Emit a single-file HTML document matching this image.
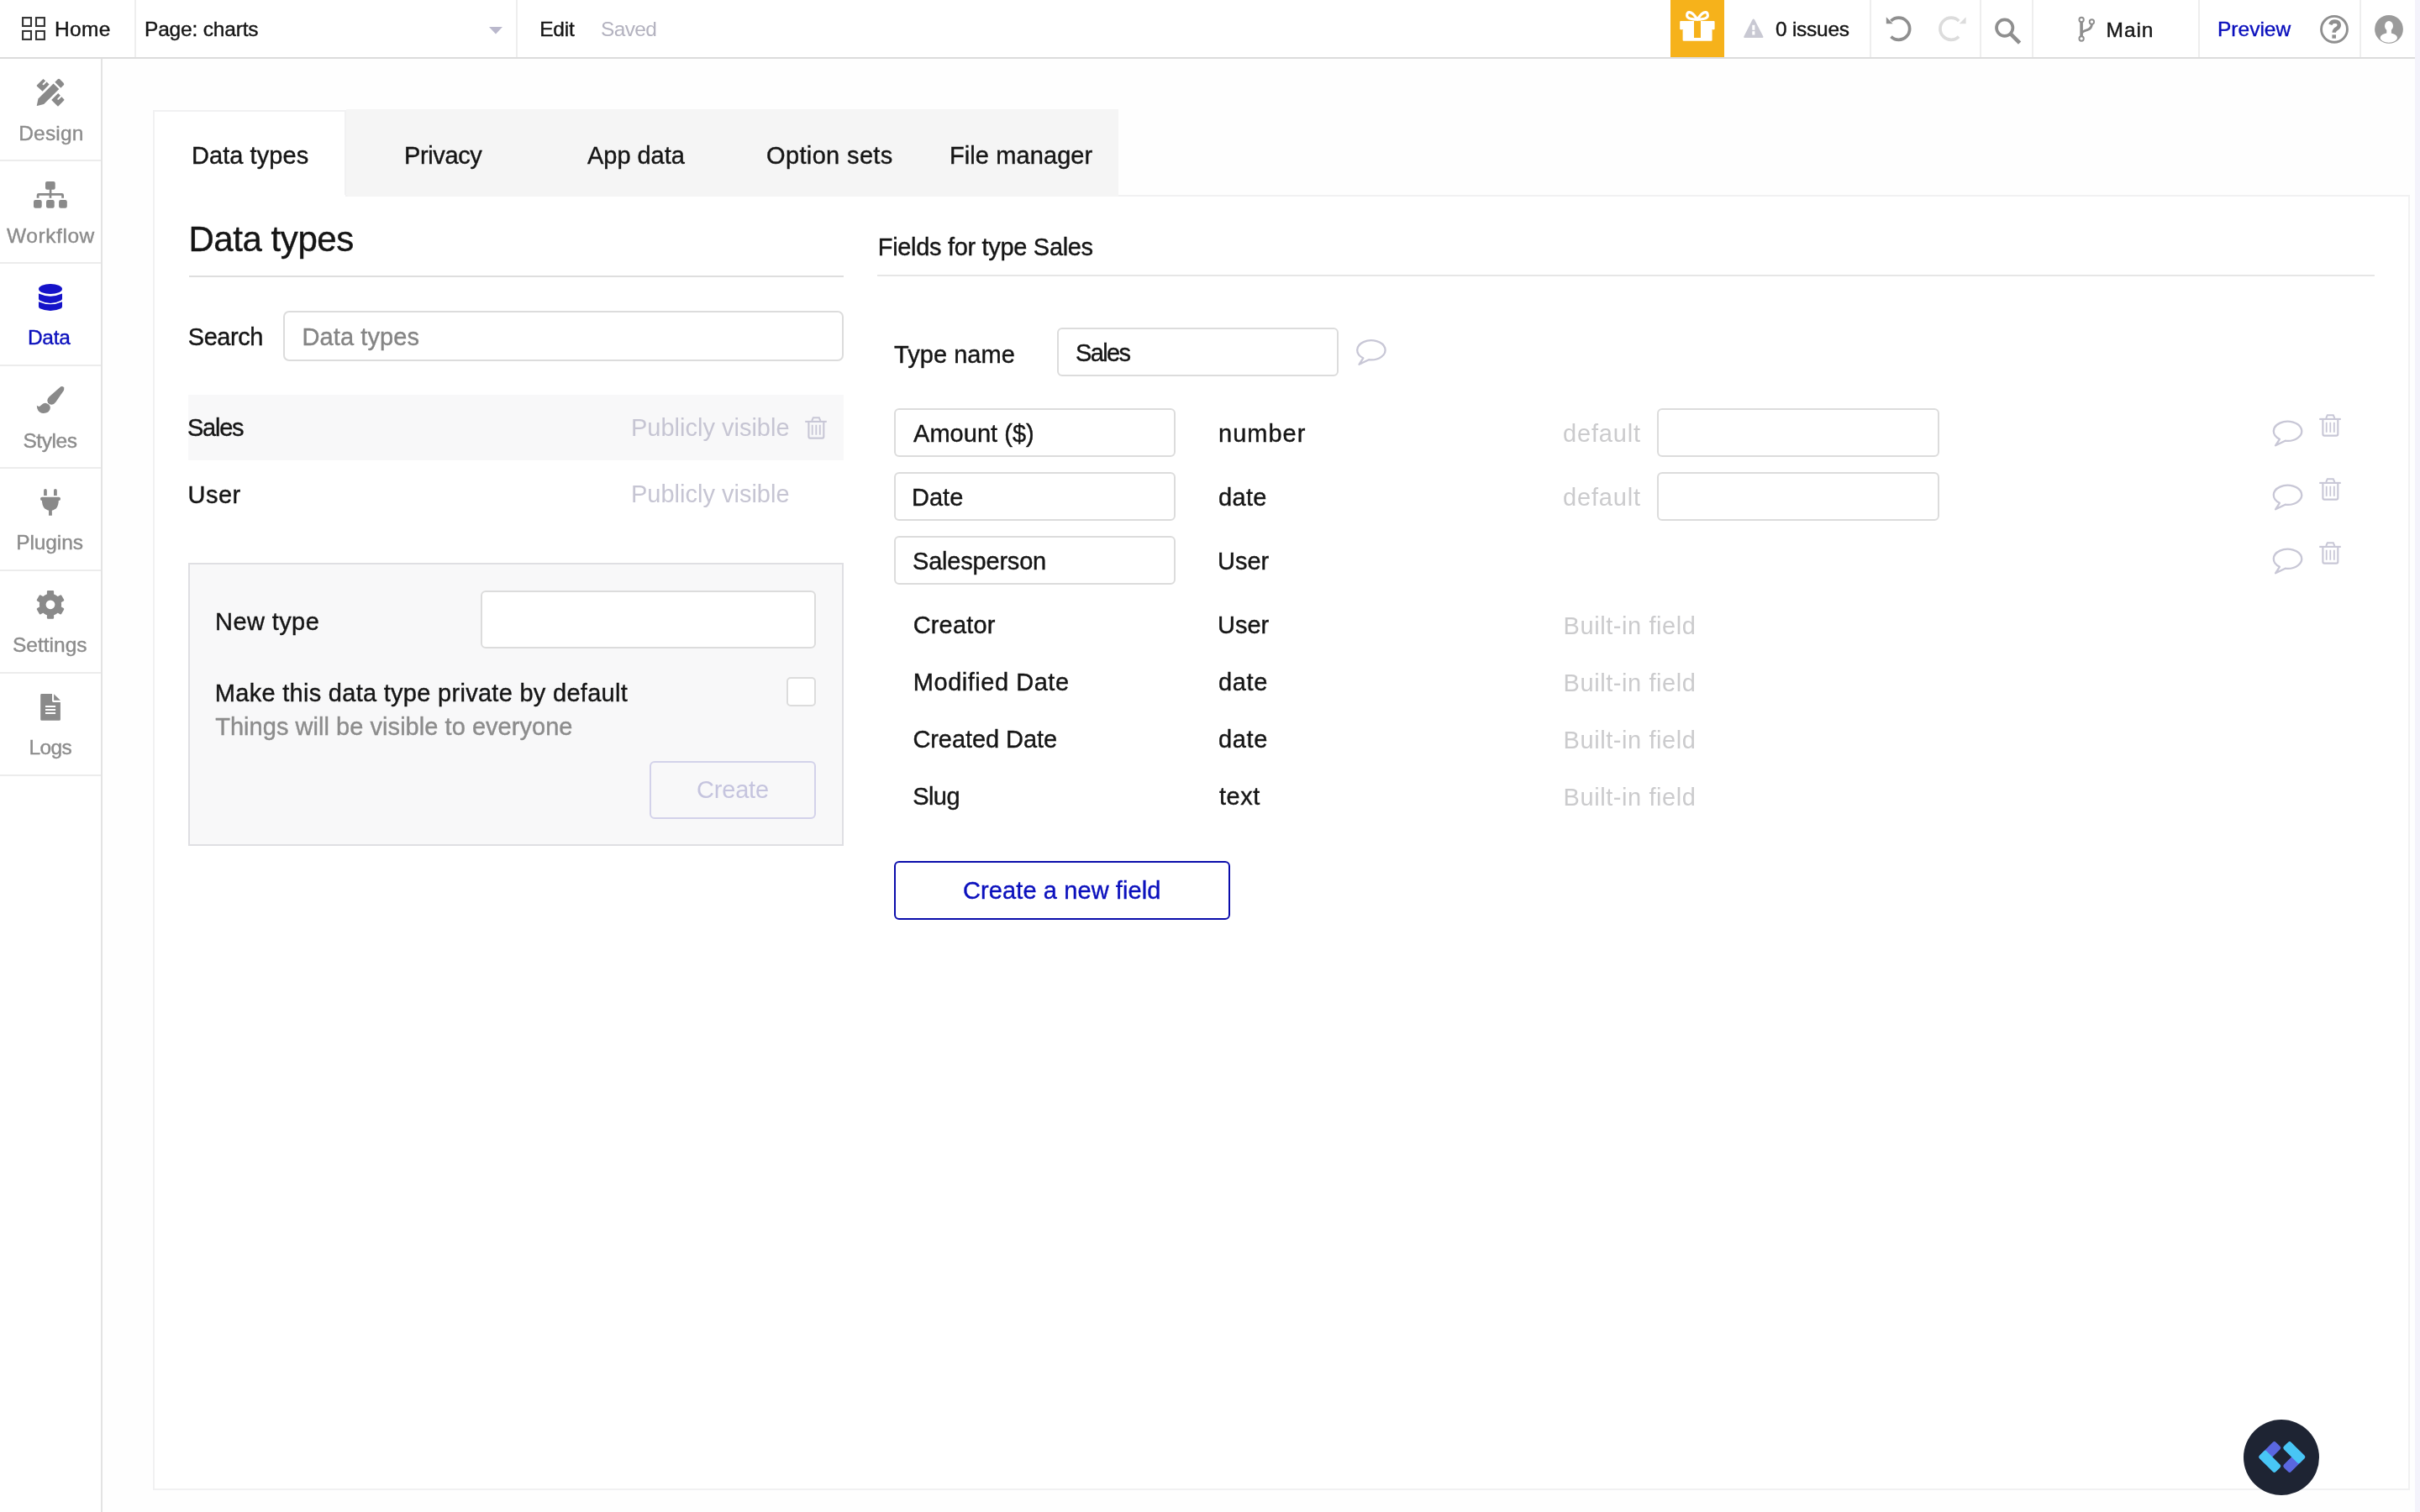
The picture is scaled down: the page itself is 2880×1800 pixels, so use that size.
<!DOCTYPE html>
<html><head><meta charset="utf-8"><title>Data</title>
<style>
html,body{margin:0;padding:0;}
body{width:2880px;height:1800px;overflow:hidden;position:relative;background:#fefefe;font-family:"Liberation Sans",sans-serif;}
.t{position:absolute;line-height:1;white-space:nowrap;-webkit-text-stroke:0.4px currentColor;}
.a{position:absolute;box-sizing:border-box;}
</style></head><body>
<!-- right strip -->
<div class="a" style="left:2874px;top:0;width:6px;height:1800px;background:#f4f3fb"></div>
<!-- topbar -->
<div class="a" style="left:0;top:0;width:2874px;height:68px;background:#fff"></div>
<div class="a" style="left:0;top:68px;width:2874px;height:2px;background:#dcdcdc"></div>
<div class="a" style="left:160px;top:0;width:2px;height:68px;background:#eeeeee"></div>
<div class="a" style="left:614px;top:0;width:2px;height:68px;background:#eeeeee"></div>
<div class="a" style="left:2225px;top:0;width:2px;height:68px;background:#eeeeee"></div>
<div class="a" style="left:2356px;top:0;width:2px;height:68px;background:#eeeeee"></div>
<div class="a" style="left:2418px;top:0;width:2px;height:68px;background:#eeeeee"></div>
<div class="a" style="left:2616px;top:0;width:2px;height:68px;background:#eeeeee"></div>
<div class="a" style="left:2808px;top:0;width:2px;height:68px;background:#eeeeee"></div>
<div class="a" style="left:1988px;top:0;width:64px;height:68px;background:#f6b21b"></div>
<!-- sidebar -->
<div class="a" style="left:0;top:70px;width:120px;height:1730px;background:#fff"></div>
<div class="a" style="left:120px;top:70px;width:2px;height:1730px;background:#e3e3e3"></div>
<div class="a" style="left:0;top:190px;width:120px;height:2px;background:#ececec"></div>
<div class="a" style="left:0;top:312px;width:120px;height:2px;background:#ececec"></div>
<div class="a" style="left:0;top:434px;width:120px;height:2px;background:#ececec"></div>
<div class="a" style="left:0;top:556px;width:120px;height:2px;background:#ececec"></div>
<div class="a" style="left:0;top:678px;width:120px;height:2px;background:#ececec"></div>
<div class="a" style="left:0;top:800px;width:120px;height:2px;background:#ececec"></div>
<div class="a" style="left:0;top:922px;width:120px;height:2px;background:#ececec"></div>
<!-- card -->
<div class="a" style="left:182px;top:131px;width:230px;height:103px;background:#fff;border:2px solid #f1f1f2;border-bottom:none"></div>
<div class="a" style="left:182px;top:232px;width:2686px;height:1542px;background:#fff;border:2px solid #f1f1f2"></div>
<div class="a" style="left:184px;top:232px;width:227px;height:4px;background:#fff"></div>
<div class="a" style="left:412px;top:130px;width:919px;height:104px;background:#f5f5f5;border-bottom-left-radius:4px"></div>
<!-- underlines -->
<div class="a" style="left:225px;top:328px;width:779px;height:2px;background:#dedede"></div>
<div class="a" style="left:1044px;top:327px;width:1782px;height:2px;background:#e6e6e6"></div>
<!-- left panel -->
<div class="a" style="left:337px;top:370px;width:667px;height:60px;background:#fff;border:2px solid #dcdcdc;border-radius:7px"></div>
<div class="a" style="left:224px;top:470px;width:780px;height:78px;background:#f8f8f9"></div>
<div class="a" style="left:224px;top:670px;width:780px;height:337px;background:#f8f8f9;border:2px solid #dfdfe3"></div>
<div class="a" style="left:572px;top:703px;width:399px;height:69px;background:#fff;border:2px solid #dcdcdc;border-radius:6px"></div>
<div class="a" style="left:936px;top:806px;width:35px;height:35px;background:#fff;border:2px solid #dcdcdc;border-radius:5px"></div>
<div class="a" style="left:773px;top:906px;width:198px;height:69px;border:2px solid #d3d2ea;border-radius:6px"></div>
<!-- right panel -->
<div class="a" style="left:1258px;top:390px;width:335px;height:58px;background:#fff;border:2px solid #dcdcdc;border-radius:6px"></div>
<div class="a" style="left:1064px;top:486px;width:335px;height:58px;background:#fff;border:2px solid #dcdcdc;border-radius:6px"></div>
<div class="a" style="left:1064px;top:562px;width:335px;height:58px;background:#fff;border:2px solid #dcdcdc;border-radius:6px"></div>
<div class="a" style="left:1064px;top:638px;width:335px;height:58px;background:#fff;border:2px solid #dcdcdc;border-radius:6px"></div>
<div class="a" style="left:1972px;top:486px;width:336px;height:58px;background:#fff;border:2px solid #dcdcdc;border-radius:6px"></div>
<div class="a" style="left:1972px;top:562px;width:336px;height:58px;background:#fff;border:2px solid #dcdcdc;border-radius:6px"></div>
<div class="a" style="left:1064px;top:1025px;width:400px;height:70px;border:2px solid #0a0cab;border-radius:6px"></div>
<!-- logo -->
<div class="a" style="left:2670px;top:1690px;width:90px;height:90px;border-radius:50%;background:#1e2433"></div>
<svg class="a" style="left:0;top:0" width="2880" height="1800" viewBox="0 0 2880 1800"><g fill="none" stroke="#333" stroke-width="2.1"><rect x="27.1" y="21.1" width="9.9" height="9.9"/><rect x="43" y="21.1" width="9.9" height="9.9"/><rect x="27.1" y="37" width="9.9" height="9.9"/><rect x="43" y="37" width="9.9" height="9.9"/></g><path d="M582,32 L598,32 L590,40.5 Z" fill="#bab8cc"/><g fill="#8a8a8a"><path d="M51.4,94 L44,101.3 Q43.3,102 44,102.7 L50.6,108.8 L58.6,100.6 L55.6,97.6 L52.3,100.9 Q51.4,101.6 50.8,100.9 Q50.2,100.2 50.9,99.5 L54.2,96.2 Z"/><path d="M69.2,110.9 L61.2,119 L68.4,126.3 Q69,126.8 69.6,126.3 L76.2,119.4 Q76.8,118.8 76.2,118.2 L73.3,115.3 L70,118.6 Q69.2,119.3 68.5,118.6 Q67.9,117.9 68.6,117.2 L71.9,113.8 Z"/><path d="M45.5,117.4 L63.6,99.4 L70.3,106 L52.2,124.1 L44.3,126 Q43.7,126.1 43.8,125.5 Z"/><path d="M65.3,97.7 L68.6,94.5 Q70,93.2 71.4,94.5 L75.6,98.7 Q77,100.1 75.6,101.5 L72.3,104.7 Z"/></g><g fill="#8a8a8a"><rect x="54" y="216" width="11.7" height="9.8" rx="2"/><rect x="58.8" y="225" width="2.6" height="6"/><path d="M43.7,235.8 L43.7,232.5 Q43.7,230.1 46.1,230.1 L73.6,230.1 Q76,230.1 76,232.5 L76,235.8 L73.2,235.8 L73.2,232.8 L46.5,232.8 L46.5,235.8 Z"/><rect x="58.6" y="232" width="2.7" height="3.8"/><rect x="40" y="238" width="9.7" height="9.8" rx="2.2"/><rect x="55" y="238" width="9.7" height="9.8" rx="2.2"/><rect x="70.1" y="238" width="9.7" height="9.8" rx="2.2"/></g><g fill="#1512c9"><ellipse cx="60" cy="344" rx="14" ry="6"/><path d="M46,349.6 Q60,355.8 74,349.6 L74,355.5 Q74,357 72.5,357.8 Q66.5,361 60,361 Q53.5,361 47.5,357.8 Q46,357 46,355.5 Z"/><path d="M46,359.3 Q60,365.4 74,359.3 L74,364.8 Q74,366.5 72.5,367.3 Q66.5,370 60,370 Q53.5,370 47.5,367.3 Q46,366.5 46,364.8 Z"/></g><g fill="#8a8a8a"><path d="M72.3,460.2 Q74.8,459.3 76,461.2 Q76.8,462.8 75.8,465 L66.3,478.8 Q64.3,481.6 61.5,481.8 Q58.6,481.6 57,479.4 Q55.6,477.2 56.8,474.8 Q58,472.8 60,471 Z"/><path d="M43.8,482.8 Q46.6,485.2 48.8,482.6 Q51.2,479.6 54,479.7 Q56.3,480 58,481.6 Q59.8,483.2 59.9,485.3 Q59.8,488.6 57.3,490.6 Q54.8,492.1 51.5,492 Q47.4,491.8 45.4,488.7 Q43.8,486.2 43.8,482.8 Z"/></g><g fill="#8a8a8a"><path d="M52.1,590 L52.1,584 Q52.1,582 54,582 Q55.8,582 55.8,584 L55.8,590 Z"/><path d="M64,590 L64,584 Q64,582 65.9,582 Q67.8,582 67.8,584 L67.8,590 Z"/><rect x="48" y="591.8" width="24" height="4.1" rx="2"/><path d="M49.9,595 L69.8,595 Q69.8,602.5 66.5,605.5 Q63.8,607.8 60,608.2 Q56.2,607.8 53.4,605.5 Q49.9,602.5 49.9,595 Z"/><path d="M58.1,607 L61.8,607 L61.9,613.8 L58,613.8 Z"/></g><g fill="#8a8a8a"><circle cx="60" cy="719.8" r="13.1"/><rect x="55.9" y="702.9" width="8.2" height="10" rx="1.2" transform="rotate(0 60 719.8)"/><rect x="55.9" y="702.9" width="8.2" height="10" rx="1.2" transform="rotate(60 60 719.8)"/><rect x="55.9" y="702.9" width="8.2" height="10" rx="1.2" transform="rotate(120 60 719.8)"/><rect x="55.9" y="702.9" width="8.2" height="10" rx="1.2" transform="rotate(180 60 719.8)"/><rect x="55.9" y="702.9" width="8.2" height="10" rx="1.2" transform="rotate(240 60 719.8)"/><rect x="55.9" y="702.9" width="8.2" height="10" rx="1.2" transform="rotate(300 60 719.8)"/></g><circle cx="60" cy="719.8" r="5.4" fill="#fff"/><g fill="#8a8a8a"><path d="M49.5,826 L62,826 L62,834.3 Q62,835.9 63.6,835.9 L71.9,835.9 L71.9,856.4 Q71.9,857.7 70.6,857.7 L49.5,857.7 Q48.2,857.7 48.2,856.4 L48.2,827.3 Q48.2,826 49.5,826 Z"/><path d="M64.1,826.2 L71.9,833.7 L64.1,833.7 Z"/></g><g fill="#fff"><rect x="54" y="840" width="12.1" height="2"/><rect x="54" y="844" width="12.1" height="2"/><rect x="54" y="848" width="12.1" height="2"/></g><g fill="#fff"><rect x="1999.2" y="24.9" width="41.4" height="10.4" rx="1"/><rect x="2002.6" y="35" width="35" height="13.7" rx="1"/></g><rect x="2016" y="25" width="8" height="20" fill="#f6b21b"/><g fill="none" stroke="#fff" stroke-width="3.1"><path d="M2020,23.2 C2017,18.5 2013.2,14.6 2010.4,14.6 C2008.2,14.6 2007.6,16.6 2007.6,18.6 C2007.7,21.6 2011,23 2020,23.2 Z" stroke-linejoin="round"/><path d="M2020,23.2 C2023,18.5 2026.8,14.6 2029.6,14.6 C2031.8,14.6 2032.4,16.6 2032.4,18.6 C2032.3,21.6 2029,23 2020,23.2 Z" stroke-linejoin="round"/></g><path d="M2086.8,22.5 Q2087.6,22.5 2088,23.3 L2098.4,43.6 Q2098.8,45 2097.6,45 L2076,45 Q2074.8,45 2075.3,43.6 L2085.6,23.3 Q2086,22.5 2086.8,22.5 Z" fill="#c9c9d3"/><rect x="2085.3" y="29.8" width="3.1" height="6" fill="#fff"/><rect x="2085.3" y="37.2" width="3.1" height="4.3" fill="#fff"/><path d="M2250.5,43.6 A13.05,13.05 0 1 0 2250.4,25" fill="none" stroke="#8f8f8f" stroke-width="3.7"/><path d="M2244.8,20.3 L2244.8,28.2 L2252.6,28.2 Z" fill="#8f8f8f"/><path d="M2331.1,43.6 A13.05,13.05 0 1 1 2331.2,25" fill="none" stroke="#dcdcdc" stroke-width="3.7"/><path d="M2339.6,20.3 L2339.6,28.2 L2331.8,28.2 Z" fill="#dcdcdc"/><circle cx="2385.7" cy="33.1" r="9.7" fill="none" stroke="#8f8f8f" stroke-width="3.7"/><path d="M2393.3,40.8 L2403.6,51.2" stroke="#8f8f8f" stroke-width="4.6"/><g fill="none" stroke="#8e8e8e"><circle cx="2477.1" cy="23.4" r="2.7" stroke-width="1.9"/><circle cx="2489.4" cy="26" r="2.7" stroke-width="1.9"/><circle cx="2477.1" cy="46" r="2.7" stroke-width="1.9"/><path d="M2477.1,26 L2477.1,43.4" stroke-width="3.6"/><path d="M2489.4,28.6 Q2489.4,34 2484,35.6 Q2478.5,37.2 2477.3,39.5" stroke-width="2.9"/></g><circle cx="2778" cy="34.8" r="15.45" fill="none" stroke="#8f8f8f" stroke-width="2.9"/><path d="M2773.3,29.3 Q2774.6,25.6 2778.6,25.6 Q2783.6,25.8 2783.8,29.8 Q2783.8,32.4 2781,34 Q2777.7,35.8 2777.7,38.8" fill="none" stroke="#8f8f8f" stroke-width="4.5"/><rect x="2775.4" y="41.4" width="4.6" height="4.3" fill="#8f8f8f"/><defs><clipPath id="avc"><circle cx="2843" cy="34.8" r="16.9"/></clipPath></defs><circle cx="2843" cy="34.8" r="16.9" fill="#9b9b9b"/><g clip-path="url(#avc)" fill="#fff"><ellipse cx="2843" cy="30.9" rx="5" ry="5.9"/><rect x="2840.3" y="34" width="5.6" height="6"/><ellipse cx="2842.8" cy="45" rx="10.2" ry="5.8"/></g><path d="M1629.00,428.22 A16.7,11.6 0 1 0 1622.32,426.30 L1617.50,433.80 Z" fill="none" stroke="#c8c7d6" stroke-width="2.3" stroke-linejoin="round"/><path d="M2719.60,524.72 A16.7,11.6 0 1 0 2712.92,522.80 L2708.10,530.30 Z" fill="none" stroke="#c8c7d6" stroke-width="2.3" stroke-linejoin="round"/><path d="M2719.60,600.72 A16.7,11.6 0 1 0 2712.92,598.80 L2708.10,606.30 Z" fill="none" stroke="#c8c7d6" stroke-width="2.3" stroke-linejoin="round"/><path d="M2719.60,676.72 A16.7,11.6 0 1 0 2712.92,674.80 L2708.10,682.30 Z" fill="none" stroke="#c8c7d6" stroke-width="2.3" stroke-linejoin="round"/><g transform="translate(0,0)" fill="none" stroke="#c8c7d6"><path d="M958.2,501.9 L983.8,501.9" stroke-width="2.1"/><path d="M966.2,501 L967.8,497.2 L974.8,497.2 L976.4,501" stroke-width="2"/><path d="M962.4,502.5 L962.4,519.8 Q962.4,521.6 964.2,521.6 L978.5,521.6 Q980.3,521.6 980.3,519.8 L980.3,502.5" stroke-width="2.1"/><path d="M966.7,505.8 L966.7,517.7 M971.3,505.8 L971.3,517.7 M975.8,505.8 L975.8,517.7" stroke-width="1.8"/></g><g transform="translate(1802,-3)" fill="none" stroke="#c8c7d6"><path d="M958.2,501.9 L983.8,501.9" stroke-width="2.1"/><path d="M966.2,501 L967.8,497.2 L974.8,497.2 L976.4,501" stroke-width="2"/><path d="M962.4,502.5 L962.4,519.8 Q962.4,521.6 964.2,521.6 L978.5,521.6 Q980.3,521.6 980.3,519.8 L980.3,502.5" stroke-width="2.1"/><path d="M966.7,505.8 L966.7,517.7 M971.3,505.8 L971.3,517.7 M975.8,505.8 L975.8,517.7" stroke-width="1.8"/></g><g transform="translate(1802,73)" fill="none" stroke="#c8c7d6"><path d="M958.2,501.9 L983.8,501.9" stroke-width="2.1"/><path d="M966.2,501 L967.8,497.2 L974.8,497.2 L976.4,501" stroke-width="2"/><path d="M962.4,502.5 L962.4,519.8 Q962.4,521.6 964.2,521.6 L978.5,521.6 Q980.3,521.6 980.3,519.8 L980.3,502.5" stroke-width="2.1"/><path d="M966.7,505.8 L966.7,517.7 M971.3,505.8 L971.3,517.7 M975.8,505.8 L975.8,517.7" stroke-width="1.8"/></g><g transform="translate(1802,149)" fill="none" stroke="#c8c7d6"><path d="M958.2,501.9 L983.8,501.9" stroke-width="2.1"/><path d="M966.2,501 L967.8,497.2 L974.8,497.2 L976.4,501" stroke-width="2"/><path d="M962.4,502.5 L962.4,519.8 Q962.4,521.6 964.2,521.6 L978.5,521.6 Q980.3,521.6 980.3,519.8 L980.3,502.5" stroke-width="2.1"/><path d="M966.7,505.8 L966.7,517.7 M971.3,505.8 L971.3,517.7 M975.8,505.8 L975.8,517.7" stroke-width="1.8"/></g><rect x="0" y="0" width="27.5" height="12.2" rx="2.6" fill="#5a67e0" transform="translate(2687.2,1734.5) rotate(-45)"/><rect x="0" y="-12.2" width="27.5" height="12.2" rx="2.6" fill="#48c6f5" transform="translate(2687.2,1734.5) rotate(45)"/><rect x="0" y="0" width="27.5" height="12.2" rx="2.6" fill="#5a67e0" transform="translate(2744.3,1734.5) rotate(135)"/><rect x="0" y="-12.2" width="27.5" height="12.2" rx="2.6" fill="#48c6f5" transform="translate(2744.3,1734.5) rotate(-135)"/></svg>
<div class="tc" style="position:absolute;left:0;top:0;width:2880px;height:1800px;will-change:transform">
<div class="t" id="home" style="left:65.0px;top:23.3px;font-size:24.5px;color:#151515;letter-spacing:0.333px">Home</div>
<div class="t" id="page" style="left:172.0px;top:23.3px;font-size:24.5px;color:#151515;letter-spacing:-0.182px">Page: charts</div>
<div class="t" id="edit" style="left:642.2px;top:23.3px;font-size:24.5px;color:#151515;letter-spacing:-0.200px">Edit</div>
<div class="t" id="saved" style="left:715.0px;top:23.3px;font-size:24.5px;color:#b3b2bf;letter-spacing:-0.625px;-webkit-text-stroke:0">Saved</div>
<div class="t" id="issues" style="left:2113.0px;top:23.3px;font-size:24.5px;color:#151515;letter-spacing:-0.271px">0 issues</div>
<div class="t" id="main" style="left:2506.6px;top:23.8px;font-size:24.5px;color:#151515;letter-spacing:0.933px">Main</div>
<div class="t" id="preview" style="left:2639.0px;top:22.9px;font-size:24.5px;color:#0b10bd;letter-spacing:0.000px">Preview</div>
<div class="t" id="s_design" style="left:22.2px;top:146.9px;font-size:24.5px;color:#8c8c8c;letter-spacing:0.200px">Design</div>
<div class="t" id="s_workflow" style="left:8.0px;top:268.9px;font-size:24.5px;color:#8c8c8c;letter-spacing:0.571px">Workflow</div>
<div class="t" id="s_data" style="left:33.0px;top:390.4px;font-size:24.5px;color:#0b10bd;letter-spacing:-0.333px">Data</div>
<div class="t" id="s_styles" style="left:27.4px;top:512.7px;font-size:24.5px;color:#8c8c8c;letter-spacing:-0.440px">Styles</div>
<div class="t" id="s_plugins" style="left:19.2px;top:633.9px;font-size:24.5px;color:#8c8c8c;letter-spacing:-0.100px">Plugins</div>
<div class="t" id="s_settings" style="left:15.0px;top:755.9px;font-size:24.5px;color:#8c8c8c;letter-spacing:0.000px">Settings</div>
<div class="t" id="s_logs" style="left:34.4px;top:877.9px;font-size:24.5px;color:#8c8c8c;letter-spacing:-0.567px">Logs</div>
<div class="t" id="t1" style="left:228.0px;top:170.5px;font-size:29px;color:#151515;letter-spacing:0.056px">Data types</div>
<div class="t" id="t2" style="left:481.0px;top:170.5px;font-size:29px;color:#151515;letter-spacing:-0.383px">Privacy</div>
<div class="t" id="t3" style="left:699.0px;top:170.5px;font-size:29px;color:#151515;letter-spacing:-0.043px">App data</div>
<div class="t" id="t4" style="left:912.0px;top:170.5px;font-size:29px;color:#151515;letter-spacing:0.360px">Option sets</div>
<div class="t" id="t5" style="left:1130.0px;top:170.5px;font-size:29px;color:#151515;letter-spacing:0.091px">File manager</div>
<div class="t" id="h1" style="left:224.4px;top:264.4px;font-size:42px;color:#151515;letter-spacing:-0.433px">Data types</div>
<div class="t" id="h2" style="left:1044.8px;top:279.6px;font-size:29px;color:#151515;letter-spacing:-0.320px">Fields for type Sales</div>
<div class="t" id="search" style="left:223.8px;top:386.5px;font-size:29px;color:#151515;letter-spacing:-0.480px">Search</div>
<div class="t" id="ph" style="left:359.5px;top:386.5px;font-size:29px;color:#858585;letter-spacing:0.089px">Data types</div>
<div class="t" id="sales" style="left:223.0px;top:494.7px;font-size:29px;color:#151515;letter-spacing:-1.250px">Sales</div>
<div class="t" id="pv1" style="left:751.0px;top:494.8px;font-size:29px;color:#c6c5d3;letter-spacing:0.000px;-webkit-text-stroke:0">Publicly visible</div>
<div class="t" id="user" style="left:223.5px;top:574.5px;font-size:29px;color:#151515;letter-spacing:0.467px">User</div>
<div class="t" id="pv2" style="left:751.0px;top:574.0px;font-size:29px;color:#c6c5d3;letter-spacing:0.000px;-webkit-text-stroke:0">Publicly visible</div>
<div class="t" id="newtype" style="left:256.1px;top:725.5px;font-size:29px;color:#151515;letter-spacing:0.400px">New type</div>
<div class="t" id="make" style="left:255.8px;top:810.5px;font-size:29px;color:#151515;letter-spacing:0.286px">Make this data type private by default</div>
<div class="t" id="things" style="left:256.2px;top:850.9px;font-size:29px;color:#8c8c8c;letter-spacing:0.042px">Things will be visible to everyone</div>
<div class="t" id="create" style="left:829.0px;top:925.5px;font-size:29px;color:#c5c4de;letter-spacing:-0.200px;-webkit-text-stroke:0">Create</div>
<div class="t" id="typename" style="left:1064.0px;top:407.5px;font-size:29px;color:#151515;letter-spacing:0.050px">Type name</div>
<div class="t" id="salesin" style="left:1280.0px;top:405.5px;font-size:29px;color:#151515;letter-spacing:-1.625px">Sales</div>
<div class="t" id="fn0" style="left:1087.0px;top:501.5px;font-size:29px;color:#151515;letter-spacing:0.033px">Amount ($)</div>
<div class="t" id="ft0" style="left:1450.0px;top:501.5px;font-size:29px;color:#151515;letter-spacing:1.000px">number</div>
<div class="t" id="fd0" style="left:1860.0px;top:501.5px;font-size:29px;color:#cbcbcd;letter-spacing:0.833px;-webkit-text-stroke:0">default</div>
<div class="t" id="fn1" style="left:1085.0px;top:577.5px;font-size:29px;color:#151515;letter-spacing:0.000px">Date</div>
<div class="t" id="ft1" style="left:1450.0px;top:577.5px;font-size:29px;color:#151515;letter-spacing:0.333px">date</div>
<div class="t" id="fd1" style="left:1860.0px;top:577.5px;font-size:29px;color:#cbcbcd;letter-spacing:0.833px;-webkit-text-stroke:0">default</div>
<div class="t" id="fn2" style="left:1086.0px;top:653.5px;font-size:29px;color:#151515;letter-spacing:-0.200px">Salesperson</div>
<div class="t" id="ft2" style="left:1449.0px;top:653.5px;font-size:29px;color:#151515;letter-spacing:0.000px">User</div>
<div class="t" id="bn0" style="left:1086.7px;top:729.8px;font-size:29px;color:#151515;letter-spacing:0.167px">Creator</div>
<div class="t" id="bt0" style="left:1449.0px;top:729.8px;font-size:29px;color:#151515;letter-spacing:0.000px">User</div>
<div class="t" id="bb0" style="left:1860.5px;top:730.8px;font-size:29px;color:#cbcbcd;letter-spacing:0.577px;-webkit-text-stroke:0">Built-in field</div>
<div class="t" id="bn1" style="left:1086.8px;top:798.0px;font-size:29px;color:#151515;letter-spacing:0.525px">Modified Date</div>
<div class="t" id="bt1" style="left:1450.0px;top:798.0px;font-size:29px;color:#151515;letter-spacing:0.667px">date</div>
<div class="t" id="bb1" style="left:1860.5px;top:799.0px;font-size:29px;color:#cbcbcd;letter-spacing:0.577px;-webkit-text-stroke:0">Built-in field</div>
<div class="t" id="bn2" style="left:1086.4px;top:866.0px;font-size:29px;color:#151515;letter-spacing:-0.064px">Created Date</div>
<div class="t" id="bt2" style="left:1450.0px;top:866.0px;font-size:29px;color:#151515;letter-spacing:0.667px">date</div>
<div class="t" id="bb2" style="left:1860.5px;top:867.0px;font-size:29px;color:#cbcbcd;letter-spacing:0.577px;-webkit-text-stroke:0">Built-in field</div>
<div class="t" id="bn3" style="left:1086.2px;top:934.0px;font-size:29px;color:#151515;letter-spacing:-0.567px">Slug</div>
<div class="t" id="bt3" style="left:1451.0px;top:934.0px;font-size:29px;color:#151515;letter-spacing:0.500px">text</div>
<div class="t" id="bb3" style="left:1860.5px;top:935.0px;font-size:29px;color:#cbcbcd;letter-spacing:0.577px;-webkit-text-stroke:0">Built-in field</div>
<div class="t" id="cnf" style="left:1146.0px;top:1045.9px;font-size:29px;color:#0b10bd;letter-spacing:0.100px">Create a new field</div>
</div>
</body></html>
